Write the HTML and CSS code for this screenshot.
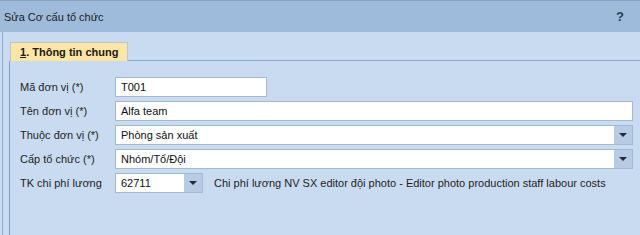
FILE: index.html
```html
<!DOCTYPE html>
<html lang="vi">
<head>
<meta charset="utf-8">
<title>Sửa Cơ cấu tổ chức</title>
<link rel="stylesheet" href="styles.css">
</head>
<body>
<div class="window">
  <div class="titlebar">
    <span class="title">Sửa Cơ cấu tổ chức</span>
    <span class="help">?</span>
  </div>
  <div class="content">
    <div class="tabs">
      <div class="tab"><u>1</u>. Thông tin chung</div>
      <div class="tab-fill"></div>
    </div>
    <div class="panel">
      <div class="row">
        <label class="lbl">Mã đơn vị (*)</label>
        <div class="field short"><span class="val">T001</span></div>
      </div>
      <div class="row">
        <label class="lbl">Tên đơn vị (*)</label>
        <div class="field wide"><span class="val">Alfa team</span></div>
      </div>
      <div class="row">
        <label class="lbl">Thuộc đơn vị (*)</label>
        <div class="field wide combo"><span class="val">Phòng sản xuất</span><span class="btn"><span class="arrow"></span></span></div>
      </div>
      <div class="row">
        <label class="lbl">Cấp tổ chức (*)</label>
        <div class="field wide combo"><span class="val">Nhóm/Tổ/Đội</span><span class="btn"><span class="arrow"></span></span></div>
      </div>
      <div class="row">
        <label class="lbl">TK chi phí lương</label>
        <div class="field tk combo"><span class="val">62711</span><span class="btn"><span class="arrow"></span></span></div>
        <span class="desc">Chi phí lương NV SX editor đội photo - Editor photo production staff labour costs</span>
      </div>
    </div>
  </div>
</div>
</body>
</html>
```

FILE: styles.css
```css
html, body {
  margin: 0;
  padding: 0;
}
body {
  width: 640px;
  height: 235px;
  overflow: hidden;
  background: #c9dbf1;
  font-family: "Liberation Sans", Arial, sans-serif;
  font-size: 11px;
  color: #1e1e1e;
}
.window {
  border-top: 1px solid #8aa2bf;
  height: 234px;
  display: flex;
  flex-direction: column;
}
.titlebar {
  height: 31px;
  background: #9ebbdb;
  display: flex;
  align-items: center;
  justify-content: space-between;
  padding: 0 16px 0 4px;
  flex: none;
}
.title {
  font-size: 11px;
  color: #1c1c1c;
}
.help {
  font-weight: bold;
  font-size: 13px;
  color: #2b3b4c;
}
.content {
  flex: 1;
  margin-left: 2px;
  border-left: 1px solid #8ea9c8;
  padding: 10px 0 0 6px;
  display: flex;
  flex-direction: column;
}
.tabs {
  display: flex;
  height: 19px;
  flex: none;
}
.tab {
  margin-left: 1px;
  background: #fde6a1;
  border: 1px solid #b3c6dc;
  border-bottom: none;
  padding: 0 9px 0 9px;
  font-weight: bold;
  line-height: 18px;
  color: #1a1a1a;
}
.tab-fill {
  flex: 1;
  border-bottom: 1px solid #8aa4c4;
}
.panel {
  flex: 1;
  border-left: 1px solid #7f9fc8;
  padding: 16px 7px 0 10px;
  display: flex;
  flex-direction: column;
  gap: 4px;
}
.row {
  display: flex;
  align-items: center;
  height: 20px;
}
.lbl {
  width: 95px;
  flex: none;
}
.field {
  box-sizing: border-box;
  height: 20px;
  background: #ffffff;
  border: 1px solid #a4b8d0;
  display: flex;
  align-items: center;
  color: #111;
}
.val {
  flex: 1;
  padding-left: 5px;
}
.short {
  width: 152px;
}
.wide {
  flex: 1;
}
.tk {
  width: 88px;
  flex: none;
}
.btn {
  width: 18px;
  height: 18px;
  background: #b7cbe4;
  display: flex;
  align-items: center;
  justify-content: center;
  flex: none;
}
.arrow {
  width: 0;
  height: 0;
  border-left: 4px solid transparent;
  border-right: 4px solid transparent;
  border-top: 4px solid #1f2b38;
}
.desc {
  margin-left: 11px;
  white-space: nowrap;
}
```
